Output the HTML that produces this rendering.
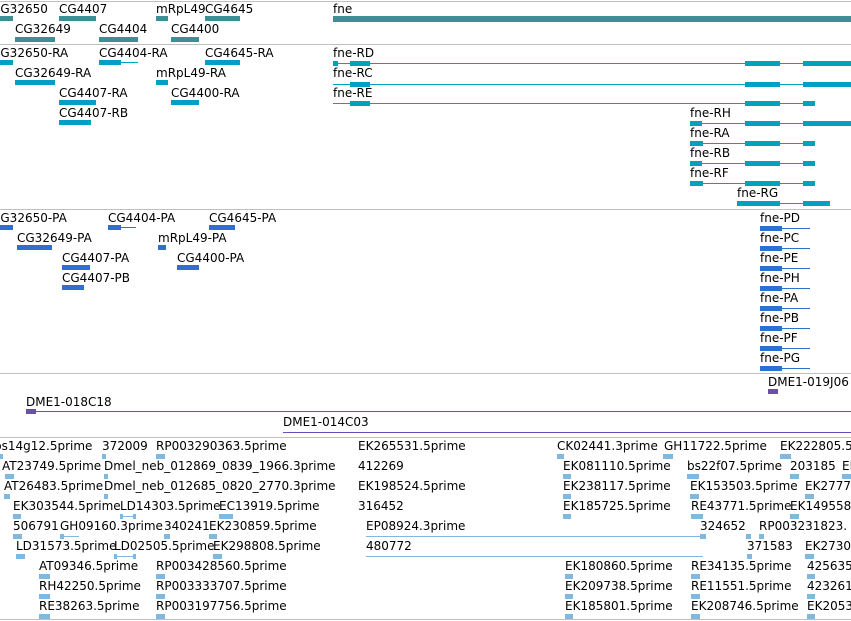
<!DOCTYPE html>
<html><head><meta charset="utf-8"><style>
body{margin:0;width:851px;height:621px;overflow:hidden;background:#fff;position:relative;font-family:"DejaVu Sans","Liberation Sans",sans-serif}
.t{position:absolute;font-size:12px;line-height:14px;white-space:nowrap;color:#000}
.b{position:absolute;height:5px}
.l{position:absolute;height:1px}
.h{position:absolute;left:0;width:851px;height:1px;background:#c0c0c0}
.g{background:#3d8f96}.x{background:#00a0c4}.p{background:#2f6fd0}.c{background:#6a4fb0}.e{background:#80b8e0}
</style></head><body>
<div class="h" style="top:1px"></div><div class="h" style="top:44px"></div><div class="h" style="top:209px"></div><div class="h" style="top:373px"></div><div class="h" style="top:437px"></div><div class="h" style="top:619px"></div>
<!-- genes -->
<div class="t" style="left:-8px;top:2px">CG32650</div><div class="b g" style="left:0;top:16px;width:13px"></div>
<div class="t" style="left:59px;top:2px">CG4407</div><div class="b g" style="left:59px;top:16px;width:37px"></div>
<div class="t" style="left:156px;top:2px">mRpL49</div><div class="b g" style="left:156px;top:16px;width:12px"></div>
<div class="t" style="left:205px;top:2px">CG4645</div><div class="b g" style="left:205px;top:16px;width:35px"></div>
<div class="t" style="left:333px;top:2px">fne</div><div class="b g" style="left:333px;top:16px;width:518px;height:6px"></div>
<div class="t" style="left:15px;top:22px">CG32649</div><div class="b g" style="left:15px;top:37px;width:40px"></div>
<div class="t" style="left:99px;top:22px">CG4404</div><div class="b g" style="left:99px;top:37px;width:39px"></div>
<div class="t" style="left:171px;top:22px">CG4400</div><div class="b g" style="left:171px;top:37px;width:28px"></div>
<!-- transcripts -->
<div class="t" style="left:-8px;top:46px">CG32650-RA</div><div class="b x" style="left:0;top:60px;width:13px"></div>
<div class="t" style="left:99px;top:46px">CG4404-RA</div><div class="b x" style="left:99px;top:60px;width:22px"></div><div class="l x" style="left:99px;top:62px;width:39px"></div>
<div class="t" style="left:205px;top:46px">CG4645-RA</div><div class="b x" style="left:205px;top:60px;width:35px"></div>
<div class="t" style="left:15px;top:66px">CG32649-RA</div><div class="b x" style="left:15px;top:80px;width:40px"></div>
<div class="t" style="left:156px;top:66px">mRpL49-RA</div><div class="b x" style="left:156px;top:80px;width:12px"></div>
<div class="t" style="left:59px;top:86px">CG4407-RA</div><div class="b x" style="left:59px;top:100px;width:37px"></div>
<div class="t" style="left:171px;top:86px">CG4400-RA</div><div class="b x" style="left:171px;top:100px;width:28px"></div>
<div class="t" style="left:59px;top:106px">CG4407-RB</div><div class="b x" style="left:59px;top:120px;width:32px"></div>
<div class="t" style="left:333px;top:46px">fne-RD</div><div class="l x" style="left:333px;top:63px;width:518px"></div><div class="b x" style="left:333px;top:61px;width:5px"></div><div class="b x" style="left:350px;top:61px;width:20px"></div><div class="b x" style="left:745px;top:61px;width:35px"></div><div class="b x" style="left:803px;top:61px;width:48px"></div>
<div class="t" style="left:333px;top:66px">fne-RC</div><div class="l x" style="left:333px;top:84px;width:518px"></div><div class="b x" style="left:350px;top:82px;width:20px"></div><div class="b x" style="left:745px;top:82px;width:35px"></div><div class="b x" style="left:803px;top:82px;width:48px"></div>
<div class="t" style="left:333px;top:86px">fne-RE</div><div class="l x" style="left:333px;top:103px;width:482px"></div><div class="b x" style="left:350px;top:101px;width:20px"></div><div class="b x" style="left:745px;top:101px;width:35px"></div><div class="b x" style="left:803px;top:101px;width:12px"></div>
<div class="t" style="left:690px;top:106px">fne-RH</div><div class="l x" style="left:690px;top:123px;width:161px"></div><div class="b x" style="left:690px;top:121px;width:12px"></div><div class="b x" style="left:745px;top:121px;width:35px"></div><div class="b x" style="left:803px;top:121px;width:48px"></div>
<div class="t" style="left:690px;top:126px">fne-RA</div><div class="l x" style="left:690px;top:143px;width:125px"></div><div class="b x" style="left:690px;top:141px;width:13px"></div><div class="b x" style="left:745px;top:141px;width:35px"></div><div class="b x" style="left:803px;top:141px;width:12px"></div>
<div class="t" style="left:690px;top:146px">fne-RB</div><div class="l x" style="left:690px;top:163px;width:125px"></div><div class="b x" style="left:690px;top:161px;width:12px"></div><div class="b x" style="left:745px;top:161px;width:35px"></div><div class="b x" style="left:803px;top:161px;width:12px"></div>
<div class="t" style="left:690px;top:166px">fne-RF</div><div class="l x" style="left:690px;top:183px;width:125px"></div><div class="b x" style="left:690px;top:181px;width:13px"></div><div class="b x" style="left:745px;top:181px;width:35px"></div><div class="b x" style="left:803px;top:181px;width:12px"></div>
<div class="t" style="left:737px;top:186px">fne-RG</div><div class="l x" style="left:737px;top:203px;width:93px"></div><div class="b x" style="left:737px;top:201px;width:10px"></div><div class="b x" style="left:745px;top:201px;width:35px"></div><div class="b x" style="left:803px;top:201px;width:27px"></div>
<!-- proteins -->
<div class="t" style="left:-8px;top:211px">CG32650-PA</div><div class="b p" style="left:0;top:225px;width:13px"></div>
<div class="t" style="left:108px;top:211px">CG4404-PA</div><div class="b p" style="left:108px;top:225px;width:13px"></div><div class="l p" style="left:108px;top:227px;width:28px"></div>
<div class="t" style="left:209px;top:211px">CG4645-PA</div><div class="b p" style="left:209px;top:225px;width:26px"></div>
<div class="t" style="left:17px;top:231px">CG32649-PA</div><div class="b p" style="left:17px;top:245px;width:35px"></div>
<div class="t" style="left:158px;top:231px">mRpL49-PA</div><div class="b p" style="left:158px;top:245px;width:8px"></div>
<div class="t" style="left:62px;top:251px">CG4407-PA</div><div class="b p" style="left:62px;top:265px;width:28px"></div>
<div class="t" style="left:177px;top:251px">CG4400-PA</div><div class="b p" style="left:177px;top:265px;width:22px"></div>
<div class="t" style="left:62px;top:271px">CG4407-PB</div><div class="b p" style="left:62px;top:285px;width:22px"></div>
<div class="t" style="left:760px;top:211px">fne-PD</div><div class="l p" style="left:760px;top:228px;width:50px"></div><div class="b p" style="left:760px;top:226px;width:22px"></div>
<div class="t" style="left:760px;top:231px">fne-PC</div><div class="l p" style="left:760px;top:248px;width:50px"></div><div class="b p" style="left:760px;top:246px;width:22px"></div>
<div class="t" style="left:760px;top:251px">fne-PE</div><div class="l p" style="left:760px;top:268px;width:50px"></div><div class="b p" style="left:760px;top:266px;width:22px"></div>
<div class="t" style="left:760px;top:271px">fne-PH</div><div class="l p" style="left:760px;top:288px;width:50px"></div><div class="b p" style="left:760px;top:286px;width:22px"></div>
<div class="t" style="left:760px;top:291px">fne-PA</div><div class="l p" style="left:760px;top:308px;width:50px"></div><div class="b p" style="left:760px;top:306px;width:22px"></div>
<div class="t" style="left:760px;top:311px">fne-PB</div><div class="l p" style="left:760px;top:328px;width:50px"></div><div class="b p" style="left:760px;top:326px;width:22px"></div>
<div class="t" style="left:760px;top:331px">fne-PF</div><div class="l p" style="left:760px;top:348px;width:50px"></div><div class="b p" style="left:760px;top:346px;width:22px"></div>
<div class="t" style="left:760px;top:351px">fne-PG</div><div class="l p" style="left:760px;top:368px;width:50px"></div><div class="b p" style="left:760px;top:366px;width:22px"></div>
<!-- clones -->
<div class="t" style="left:768px;top:375px">DME1-019J06</div><div class="b c" style="left:768px;top:389px;width:10px"></div>
<div class="t" style="left:26px;top:395px">DME1-018C18</div><div class="b c" style="left:26px;top:409px;width:10px"></div><div class="l c" style="left:26px;top:411px;width:825px"></div>
<div class="t" style="left:283px;top:415px">DME1-014C03</div><div class="l c" style="left:283px;top:432px;width:568px"></div>
<!-- ESTs -->
<div class="t" style="left:-6px;top:439px">bs14g12.5prime</div><div class="b e" style="left:0;top:454px;width:3px"></div>
<div class="t" style="left:102px;top:439px">372009</div><div class="b e" style="left:102px;top:454px;width:4px"></div>
<div class="t" style="left:156px;top:439px">RP003290363.5prime</div><div class="b e" style="left:156px;top:454px;width:9px"></div>
<div class="t" style="left:358px;top:439px">EK265531.5prime</div>
<div class="t" style="left:557px;top:439px">CK02441.3prime</div><div class="b e" style="left:557px;top:454px;width:7px"></div>
<div class="t" style="left:664px;top:439px">GH11722.5prime</div><div class="b e" style="left:663px;top:454px;width:10px"></div>
<div class="t" style="left:780px;top:439px">EK222805.5prime</div><div class="b e" style="left:780px;top:454px;width:11px"></div>
<div class="t" style="left:2px;top:459px">AT23749.5prime</div><div class="b e" style="left:5px;top:474px;width:9px"></div>
<div class="t" style="left:104px;top:459px">Dmel_neb_012869_0839_1966.3prime</div><div class="b e" style="left:104px;top:474px;width:4px"></div>
<div class="t" style="left:358px;top:459px">412269</div>
<div class="t" style="left:563px;top:459px">EK081110.5prime</div><div class="b e" style="left:563px;top:474px;width:8px"></div>
<div class="t" style="left:687px;top:459px">bs22f07.5prime</div><div class="b e" style="left:687px;top:474px;width:12px"></div>
<div class="t" style="left:790px;top:459px">203185</div><div class="b e" style="left:790px;top:474px;width:9px"></div>
<div class="t" style="left:842px;top:459px">EK</div><div class="b e" style="left:842px;top:474px;width:9px"></div>
<div class="t" style="left:4px;top:479px">AT26483.5prime</div><div class="b e" style="left:4px;top:494px;width:6px"></div>
<div class="t" style="left:104px;top:479px">Dmel_neb_012685_0820_2770.3prime</div><div class="b e" style="left:104px;top:494px;width:4px"></div>
<div class="t" style="left:358px;top:479px">EK198524.5prime</div>
<div class="t" style="left:563px;top:479px">EK238117.5prime</div><div class="b e" style="left:563px;top:494px;width:8px"></div>
<div class="t" style="left:690px;top:479px">EK153503.5prime</div><div class="b e" style="left:690px;top:494px;width:9px"></div>
<div class="t" style="left:805px;top:479px">EK2777</div><div class="b e" style="left:805px;top:494px;width:9px"></div>
<div class="t" style="left:13px;top:499px">EK303544.5prime</div><div class="b e" style="left:13px;top:514px;width:8px"></div>
<div class="t" style="left:120px;top:499px">LD14303.5prime</div><div class="l e" style="left:120px;top:516px;width:16px"></div><div class="b e" style="left:120px;top:514px;width:3px"></div><div class="b e" style="left:133px;top:514px;width:3px"></div>
<div class="t" style="left:219px;top:499px">EC13919.5prime</div><div class="b e" style="left:219px;top:514px;width:14px"></div>
<div class="t" style="left:358px;top:499px">316452</div>
<div class="t" style="left:563px;top:499px">EK185725.5prime</div><div class="b e" style="left:563px;top:514px;width:8px"></div>
<div class="t" style="left:691px;top:499px">RE43771.5prime</div><div class="b e" style="left:691px;top:514px;width:12px"></div>
<div class="t" style="left:790px;top:499px">EK149558</div><div class="b e" style="left:790px;top:514px;width:9px"></div>
<div class="t" style="left:13px;top:519px">506791</div><div class="b e" style="left:13px;top:534px;width:9px"></div>
<div class="t" style="left:60px;top:519px">GH09160.3prime</div><div class="l e" style="left:60px;top:536px;width:19px"></div><div class="b e" style="left:60px;top:534px;width:4px"></div>
<div class="t" style="left:164px;top:519px">340241</div><div class="b e" style="left:164px;top:534px;width:6px"></div>
<div class="t" style="left:209px;top:519px">EK230859.5prime</div><div class="b e" style="left:209px;top:534px;width:8px"></div>
<div class="t" style="left:366px;top:519px">EP08924.3prime</div><div class="l e" style="left:366px;top:536px;width:340px"></div><div class="b e" style="left:700px;top:534px;width:6px"></div>
<div class="t" style="left:700px;top:519px">324652</div><div class="b e" style="left:746px;top:534px;width:5px"></div>
<div class="t" style="left:759px;top:519px">RP003231823.</div><div class="b e" style="left:759px;top:534px;width:5px"></div>
<div class="t" style="left:16px;top:539px">LD31573.5prime</div><div class="b e" style="left:16px;top:554px;width:9px"></div>
<div class="t" style="left:114px;top:539px">LD02505.5prime</div><div class="l e" style="left:114px;top:556px;width:22px"></div><div class="b e" style="left:114px;top:554px;width:3px"></div><div class="b e" style="left:133px;top:554px;width:3px"></div>
<div class="t" style="left:213px;top:539px">EK298808.5prime</div><div class="b e" style="left:213px;top:554px;width:9px"></div>
<div class="t" style="left:366px;top:539px">480772</div><div class="l e" style="left:366px;top:556px;width:337px"></div>
<div class="t" style="left:747px;top:539px">371583</div><div class="b e" style="left:747px;top:554px;width:5px"></div>
<div class="t" style="left:805px;top:539px">EK2730</div><div class="b e" style="left:805px;top:554px;width:9px"></div>
<div class="t" style="left:39px;top:559px">AT09346.5prime</div><div class="b e" style="left:39px;top:574px;width:11px"></div>
<div class="t" style="left:156px;top:559px">RP003428560.5prime</div><div class="b e" style="left:156px;top:574px;width:9px"></div>
<div class="t" style="left:565px;top:559px">EK180860.5prime</div><div class="b e" style="left:565px;top:574px;width:8px"></div>
<div class="t" style="left:691px;top:559px">RE34135.5prime</div><div class="b e" style="left:691px;top:574px;width:9px"></div>
<div class="t" style="left:807px;top:559px">425635</div><div class="b e" style="left:807px;top:574px;width:8px"></div>
<div class="t" style="left:39px;top:579px">RH42250.5prime</div><div class="b e" style="left:39px;top:594px;width:11px"></div>
<div class="t" style="left:156px;top:579px">RP003333707.5prime</div><div class="b e" style="left:156px;top:594px;width:9px"></div>
<div class="t" style="left:565px;top:579px">EK209738.5prime</div><div class="b e" style="left:565px;top:594px;width:8px"></div>
<div class="t" style="left:691px;top:579px">RE11551.5prime</div><div class="b e" style="left:691px;top:594px;width:9px"></div>
<div class="t" style="left:807px;top:579px">423261</div><div class="b e" style="left:807px;top:594px;width:8px"></div>
<div class="t" style="left:39px;top:599px">RE38263.5prime</div><div class="b e" style="left:39px;top:614px;width:11px"></div>
<div class="t" style="left:156px;top:599px">RP003197756.5prime</div><div class="b e" style="left:156px;top:614px;width:9px"></div>
<div class="t" style="left:565px;top:599px">EK185801.5prime</div><div class="b e" style="left:565px;top:614px;width:8px"></div>
<div class="t" style="left:691px;top:599px">EK208746.5prime</div><div class="b e" style="left:691px;top:614px;width:9px"></div>
<div class="t" style="left:807px;top:599px">EK2053</div><div class="b e" style="left:807px;top:614px;width:8px"></div>
</body></html>
